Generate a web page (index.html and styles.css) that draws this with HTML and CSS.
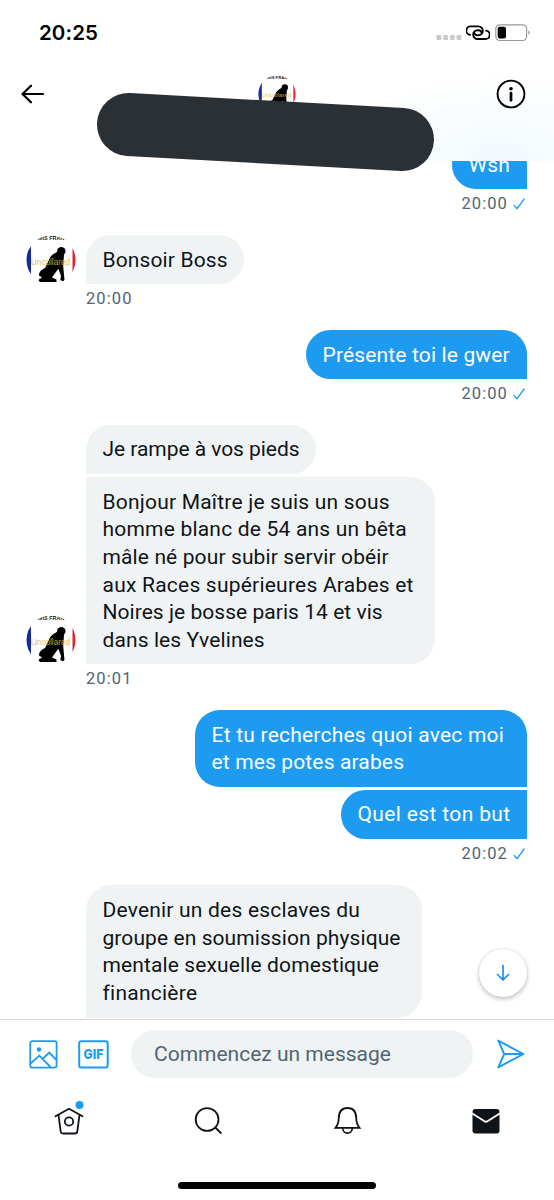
FILE: index.html
```html
<!DOCTYPE html>
<html lang="fr">
<head>
<meta charset="utf-8">
<title>Messages</title>
<link rel="stylesheet" href="styles.css">
</head>
<body>
<svg width="0" height="0" class="defs">
  <defs>
    <clipPath id="round"><circle cx="25" cy="25" r="24.5"/></clipPath>
    <symbol id="avatar" viewBox="0 0 50 50">
      <g clip-path="url(#round)">
        <rect width="50" height="50" fill="#fff"/>
        <rect width="5" height="50" fill="#172a9c"/>
        <rect x="46.5" width="4" height="50" fill="#df2438"/>
        <text x="25" y="5.2" text-anchor="middle" class="av-top">OMIS FRANC</text>
        <circle cx="35.3" cy="16.3" r="4.2"/>
        <path d="M32.5 16 L27.5 19 Q24 21 22 27 L19 33 Q12.5 36 13 40.5 L16 42.5 L12.8 44.5 V47 H30.5 V44.5 L26 42.5 L31 35.5 L32.5 34 L35 41 L34.3 45 L37.5 46.5 L38.5 45 L37.2 31 L38 20 Z"/>
        <text x="24.5" y="29.5" text-anchor="middle" class="av-name">Uncollared</text>
      </g>
    </symbol>
    <symbol id="check" viewBox="0 0 14 14"><path d="M1.8 8.1 L5 11.6 L12.4 1.6" fill="none" stroke="#1d9bf0" stroke-width="1.4"/></symbol>
  </defs>
</svg>
<div class="phone">
  <header class="top">
    <div class="status">
      <span class="clock">20:25</span>
      <div class="indicators">
        <svg width="26" height="8" viewBox="0 0 26 8" fill="#c9c9c9"><rect x="0.5" y="2" width="4.8" height="5" rx="1"/><rect x="7.2" y="2" width="4.8" height="5" rx="1"/><rect x="13.9" y="2" width="4.8" height="5" rx="1"/><rect x="20.6" y="2" width="4.8" height="5" rx="1"/></svg>
        <svg class="link" width="24" height="16" viewBox="0 0 24 16" fill="none" stroke="#000" stroke-width="1.9" stroke-linecap="round"><path d="M4 9.8 A4.2 4.2 0 0 1 5 1.4 H12.4 A4.4 4.4 0 0 1 12.4 10.2 H11.2 Q9 10 8.6 8.2"/><path d="M20 5.6 A4.2 4.2 0 0 1 19 14 H11.6 A4.4 4.4 0 0 1 11.6 5.2 H12.8 Q15 5.4 15.4 7.2"/></svg>
        <svg width="36" height="18" viewBox="0 0 36 18"><rect x=".8" y=".8" width="30.8" height="15.7" rx="4" fill="#fff" stroke="#999" stroke-width="1.2"/><rect x="2.7" y="2.7" width="8.3" height="11.8" rx="2"/><path d="M33.4 6.2 Q36 8.6 33.4 11Z" fill="#888"/></svg>
      </div>
    </div>
    <div class="nav">
      <svg width="24" height="20" viewBox="0 0 24 20" fill="none" stroke="#000" stroke-width="2.2" stroke-linecap="round" stroke-linejoin="round"><path d="M22 10 H1.5 M10 1.7 L1.5 10 L10 18.3"/></svg>
      <svg class="nav-avatar" width="38" height="38"><use href="#avatar"/></svg>
      <svg width="30" height="30" viewBox="0 0 30 30"><circle cx="15" cy="15" r="13.4" fill="none" stroke="#000" stroke-width="1.9"/><circle cx="15" cy="9.7" r="1.8"/><path d="M15 14.2 V21.3" stroke="#000" stroke-width="2.7" stroke-linecap="round"/></svg>
    </div>
    <svg class="redaction" width="554" height="180"><path d="M128.5 124.5 L402.5 139.5" stroke="#2b3034" stroke-width="63" stroke-linecap="round"/></svg>
  </header>

  <main class="chat">
    <section class="group out">
      <div class="bubble b1"><span class="w1">Wsh</span></div>
      <div class="time">20:00<svg width="14" height="14"><use href="#check"/></svg></div>
    </section>
    <section class="group in">
      <svg class="avatar" width="50" height="50"><use href="#avatar"/></svg>
      <div class="bubble b2"><span class="w2">Bonsoir Boss</span></div>
      <div class="time">20:00</div>
    </section>
    <section class="group out">
      <div class="bubble b3"><span class="w3">Présente toi le gwer</span></div>
      <div class="time">20:00<svg width="14" height="14"><use href="#check"/></svg></div>
    </section>
    <section class="group in">
      <svg class="avatar" width="50" height="50"><use href="#avatar"/></svg>
      <div class="bubble b4"><span class="w4">Je rampe à vos pieds</span></div>
      <div class="bubble wide"><span class="w5">Bonjour Maître je suis un sous</span><span class="w6">homme blanc de 54 ans un bêta</span><span class="w7">mâle né pour subir servir obéir</span><span class="w8">aux Races supérieures Arabes et</span><span class="w9">Noires je bosse paris 14 et vis</span><span class="w10">dans les Yvelines</span></div>
      <div class="time">20:01</div>
    </section>
    <section class="group out">
      <div class="bubble b5"><span class="w11">Et tu recherches quoi avec moi</span><span class="w12">et mes potes arabes</span></div>
      <div class="bubble b6"><span class="w13">Quel est ton but</span></div>
      <div class="time">20:02<svg width="14" height="14"><use href="#check"/></svg></div>
    </section>
    <section class="group in">
      <div class="bubble last"><span class="w14">Devenir un des esclaves du</span><span class="w15">groupe en soumission physique</span><span class="w16">mentale sexuelle domestique</span><span class="w17">financière</span></div>
    </section>
    <div class="jump"><svg width="14" height="18" viewBox="0 0 14 18" fill="none" stroke="#1d8fe8" stroke-width="1.7" stroke-linecap="round" stroke-linejoin="round"><path d="M7 1.5 V16 M1.5 10.5 L7 16 L12.5 10.5"/></svg></div>
  </main>

  <div class="compose">
    <svg width="29" height="29" viewBox="0 0 29 29" fill="none" stroke="#1d9bf0" stroke-width="1.8"><rect x="1.2" y="1.2" width="26.4" height="26.4" rx="2"/><circle cx="10" cy="9.5" r="2.2" fill="#1d9bf0" stroke="none"/><path d="M1.5 23.5 L10.3 15.7 L22 27.5 M13.5 19 L20.2 12.5 L27.5 20"/></svg>
    <svg class="gif" width="31" height="29" viewBox="0 0 31 29"><rect x="1.2" y="1.2" width="28.5" height="26.4" rx="2" fill="none" stroke="#1d9bf0" stroke-width="2"/><text x="15.5" y="19.3" text-anchor="middle" textLength="20" lengthAdjust="spacingAndGlyphs">GIF</text></svg>
    <div class="field"><span>Commencez un message</span></div>
    <svg class="send" width="28" height="30" viewBox="0 0 28 30" fill="none" stroke="#1d9bf0" stroke-width="1.9" stroke-linejoin="round"><path d="M1.3 1.7 L26.5 15 L1.3 28.3 L7.2 15 Z M7.2 15 H26"/></svg>
  </div>

  <nav class="tabs">
    <svg width="32" height="38" viewBox="0 0 32 38" fill="none" stroke="#0f1419" stroke-width="1.8" stroke-linecap="round" stroke-linejoin="round"><path d="M2.5 17.2 L16 9.7 L29.5 17.2 M5.5 16 L7.7 32.5 Q8 34.5 10 34.5 H22 Q24 34.5 24.3 32.5 L26.5 16"/><circle cx="16" cy="22.5" r="4.2"/><circle cx="26.5" cy="6" r="4" fill="#1d9bf0" stroke="none"/></svg>
    <svg width="32" height="38" viewBox="0 0 32 38" fill="none" stroke="#0f1419" stroke-width="1.8" stroke-linecap="round"><circle cx="15.1" cy="20.5" r="11.4"/><path d="M23.3 28.5 L28.8 34"/></svg>
    <svg width="32" height="38" viewBox="0 0 32 38" fill="none" stroke="#0f1419" stroke-width="1.8" stroke-linejoin="miter"><path d="M4.5 28.8 Q7.7 25 7.7 19.5 C7.8 12.5 11.2 9 16.5 9 C21.8 9 25.2 12.5 25.3 19.5 Q25.3 25 28.5 28.8 Z M11.7 29 A4.8 5.2 0 0 0 21.3 29"/></svg>
    <svg width="32" height="38" viewBox="0 0 32 38"><rect x="2.5" y="10" width="27" height="24.5" rx="3" fill="#0f1419"/><path d="M1.5 14 L14.5 22.2 Q16 23.2 17.5 22.2 L30.5 14" fill="none" stroke="#fff" stroke-width="1.9"/></svg>
  </nav>
  <div class="home"></div>
</div>
</body>
</html>
```
FILE: styles.css
```css
* { box-sizing: border-box; }
body { margin: 0; background: #fff; color: #0f1419; font-family: Roboto, "Liberation Sans", sans-serif; }
svg { display: block; flex: none; }
.defs { position: absolute; }
.phone { width: 554px; height: 1200px; display: flex; flex-direction: column; overflow: hidden; }
.top { position: relative; z-index: 2; height: 161px; flex: none; background: radial-gradient(ellipse 170px 90px at 500px 161px, #f2fafe, #fff) #fff; }
.status { height: 66px; display: flex; justify-content: space-between; padding: 0 23px 0 39px; align-items: center; }
.clock { font: 600 20.5px/24px Inter, sans-serif; letter-spacing: .1px; color: #000; }
.indicators { display: flex; align-items: center; gap: 4px; }
.indicators svg:first-child { margin-top: 8px; }
.indicators .link { margin-right: 1px; }
.nav { height: 55px; display: grid; grid-template-columns: 1fr 38px 1fr; align-items: center; padding: 0 28px 0 21px; }
.nav > :last-child { justify-self: end; }
.nav-avatar { margin-left: 3px; }
.redaction { position: absolute; left: 0; top: 0; }
.av-top { font: 700 5.5px "Liberation Sans", sans-serif; fill: #222; }
.av-name { font: 8.2px "Liberation Sans", sans-serif; fill: #e3b934; opacity: .85; }

.chat { height: 858px; flex: none; position: relative; display: flex; flex-direction: column; justify-content: flex-end; overflow: hidden; padding: 0 27px 1px; }
.group { position: relative; display: flex; flex-direction: column; gap: 3.5px; flex: none; }
.in { align-items: flex-start; padding-left: 59px; }
.out { align-items: flex-end; }
.bubble { padding: 11.3px 16px 9.9px 16.5px; border-radius: 25px; font-size: 21px; line-height: 27.6px; white-space: nowrap; }
.bubble span { display: block; width: max-content; }
.in .bubble { background: #eff3f4; border-bottom-left-radius: 0; }
.in .bubble + .bubble { border-top-left-radius: 0; }
.out .bubble { background: #1d9bf0; color: #fff; border-bottom-right-radius: 0; }
.out .bubble + .bubble { border-top-right-radius: 0; }
.b1 { width: 75px; }
.b2 { width: 158px; }
.b3 { width: 221px; }
.b4 { width: 230px; }
.b5 { width: 332px; }
.b6 { width: 186px; }
.bubble.wide { width: 349px; }
.bubble.last { width: 336px; padding-top: 12px; padding-bottom: 10.6px; }
.w1 { letter-spacing: .15px; }
.w2 { letter-spacing: .13px; }
.w3 { letter-spacing: .15px; }
.w4 { letter-spacing: -.05px; }
.w5, .w6 { letter-spacing: .2px; }
.w7 { letter-spacing: .12px; }
.w8 { letter-spacing: .22px; }
.w9 { letter-spacing: .04px; }
.w10 { letter-spacing: .1px; }
.w11 { letter-spacing: .22px; }
.w12 { letter-spacing: .14px; }
.w13 { letter-spacing: .36px; }
.w14 { letter-spacing: .2px; }
.w15 { letter-spacing: .08px; }
.w16 { letter-spacing: .12px; }
.w17 { letter-spacing: .25px; }
.time { height: 42.6px; padding-top: 2.4px; display: flex; gap: 4px; font-size: 16.5px; line-height: 18px; letter-spacing: 1.1px; color: #536471; }
.time svg { margin: 2px 1px 0 0; }
.avatar { position: absolute; left: -1px; bottom: 45px; }
.jump { position: absolute; right: 27px; bottom: 22px; width: 48px; height: 48px; border-radius: 50%; background: #fff; display: grid; place-items: center; box-shadow: 0 2px 5px rgba(0,0,0,.24), 0 0 2px rgba(0,0,0,.12); }

.compose { height: 68px; flex: none; border-top: 1px solid #d5dadd; display: flex; align-items: center; padding: 1px 29px 0 29px; }
.gif { margin-left: 20px; }
.gif text { font: 800 13.5px Inter, sans-serif; fill: #1d9bf0; }
.field { width: 342px; height: 48px; border-radius: 24px; background: #eff3f4; margin-left: 22px; padding-left: 23px; font-size: 21px; line-height: 48px; color: #536471; white-space: nowrap; letter-spacing: 0; }
.send { margin-left: 24px; }
.tabs { height: 66px; flex: none; display: flex; justify-content: space-between; align-items: center; padding: 0 52px 4px 53px; }
.home { width: 198px; height: 7px; border-radius: 4px; background: #000; margin: 29px auto 0; }
```
